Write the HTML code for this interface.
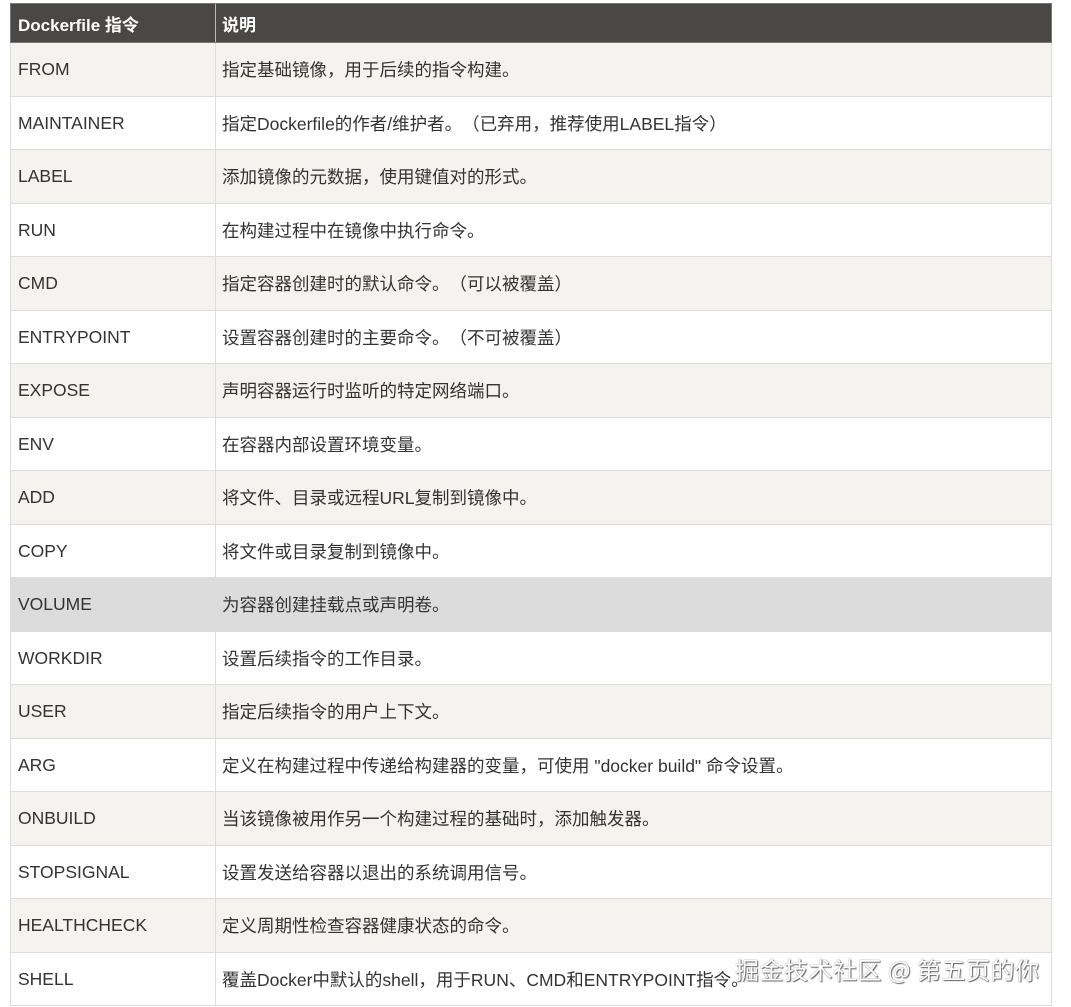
<!DOCTYPE html>
<html><head><meta charset="utf-8"><style>
body{margin:0;width:1071px;height:1007px;background:#fff;overflow:hidden;position:relative;font-family:"Liberation Sans","Noto Sans CJK SC",sans-serif;color:#333;text-spacing-trim:space-all;}
.r{position:absolute;left:10px;width:1042px;border:1px solid #ddd;border-top:none;box-sizing:border-box;font-size:17.5px;}
.r div{position:absolute;top:0;bottom:0;display:flex;align-items:center;white-space:nowrap;}
.a{left:0;width:205px;padding-left:7px;border-right:1px solid #ddd;box-sizing:border-box;}
.b{left:205px;padding-left:6px;}
.h{background:#4a4846;color:#fff;font-weight:bold;border-color:#777;font-size:17px;}
.h .a{border-right-color:#bbb;}
.o{background:#f4f3ef;}
.v{background:#dcdcdc;}
.wm{position:absolute;left:735px;top:951px;font-size:24px;color:#fff;text-shadow:0 0 1px #555,1px 1px 1px #666;font-family:"Noto Sans CJK SC",sans-serif;letter-spacing:0.5px;}
</style></head><body>
<div class="r h" style="top:3px;height:40px;border-top:1px solid #777"><div class="a">Dockerfile 指令</div><div class="b">说明</div></div>
<div class="r o" style="top:43px;height:54px"><div class="a">FROM</div><div class="b">指定基础镜像，用于后续的指令构建。</div></div>
<div class="r" style="top:97px;height:53px"><div class="a">MAINTAINER</div><div class="b">指定Dockerfile的作者/维护者。（已弃用，推荐使用LABEL指令）</div></div>
<div class="r o" style="top:150px;height:54px"><div class="a">LABEL</div><div class="b">添加镜像的元数据，使用键值对的形式。</div></div>
<div class="r" style="top:204px;height:53px"><div class="a">RUN</div><div class="b">在构建过程中在镜像中执行命令。</div></div>
<div class="r o" style="top:257px;height:54px"><div class="a">CMD</div><div class="b">指定容器创建时的默认命令。（可以被覆盖）</div></div>
<div class="r" style="top:311px;height:53px"><div class="a">ENTRYPOINT</div><div class="b">设置容器创建时的主要命令。（不可被覆盖）</div></div>
<div class="r o" style="top:364px;height:54px"><div class="a">EXPOSE</div><div class="b">声明容器运行时监听的特定网络端口。</div></div>
<div class="r" style="top:418px;height:53px"><div class="a">ENV</div><div class="b">在容器内部设置环境变量。</div></div>
<div class="r o" style="top:471px;height:54px"><div class="a">ADD</div><div class="b">将文件、目录或远程URL复制到镜像中。</div></div>
<div class="r" style="top:525px;height:53px"><div class="a">COPY</div><div class="b">将文件或目录复制到镜像中。</div></div>
<div class="r v" style="top:578px;height:54px"><div class="a">VOLUME</div><div class="b">为容器创建挂载点或声明卷。</div></div>
<div class="r" style="top:632px;height:53px"><div class="a">WORKDIR</div><div class="b">设置后续指令的工作目录。</div></div>
<div class="r o" style="top:685px;height:54px"><div class="a">USER</div><div class="b">指定后续指令的用户上下文。</div></div>
<div class="r" style="top:739px;height:53px"><div class="a">ARG</div><div class="b">定义在构建过程中传递给构建器的变量，可使用 "docker build" 命令设置。</div></div>
<div class="r o" style="top:792px;height:54px"><div class="a">ONBUILD</div><div class="b">当该镜像被用作另一个构建过程的基础时，添加触发器。</div></div>
<div class="r" style="top:846px;height:53px"><div class="a">STOPSIGNAL</div><div class="b">设置发送给容器以退出的系统调用信号。</div></div>
<div class="r o" style="top:899px;height:54px"><div class="a">HEALTHCHECK</div><div class="b">定义周期性检查容器健康状态的命令。</div></div>
<div class="r" style="top:953px;height:53px"><div class="a">SHELL</div><div class="b">覆盖Docker中默认的shell，用于RUN、CMD和ENTRYPOINT指令。</div></div>
<div class="wm">掘金技术社区 @ 第五页的你</div>
</body></html>
